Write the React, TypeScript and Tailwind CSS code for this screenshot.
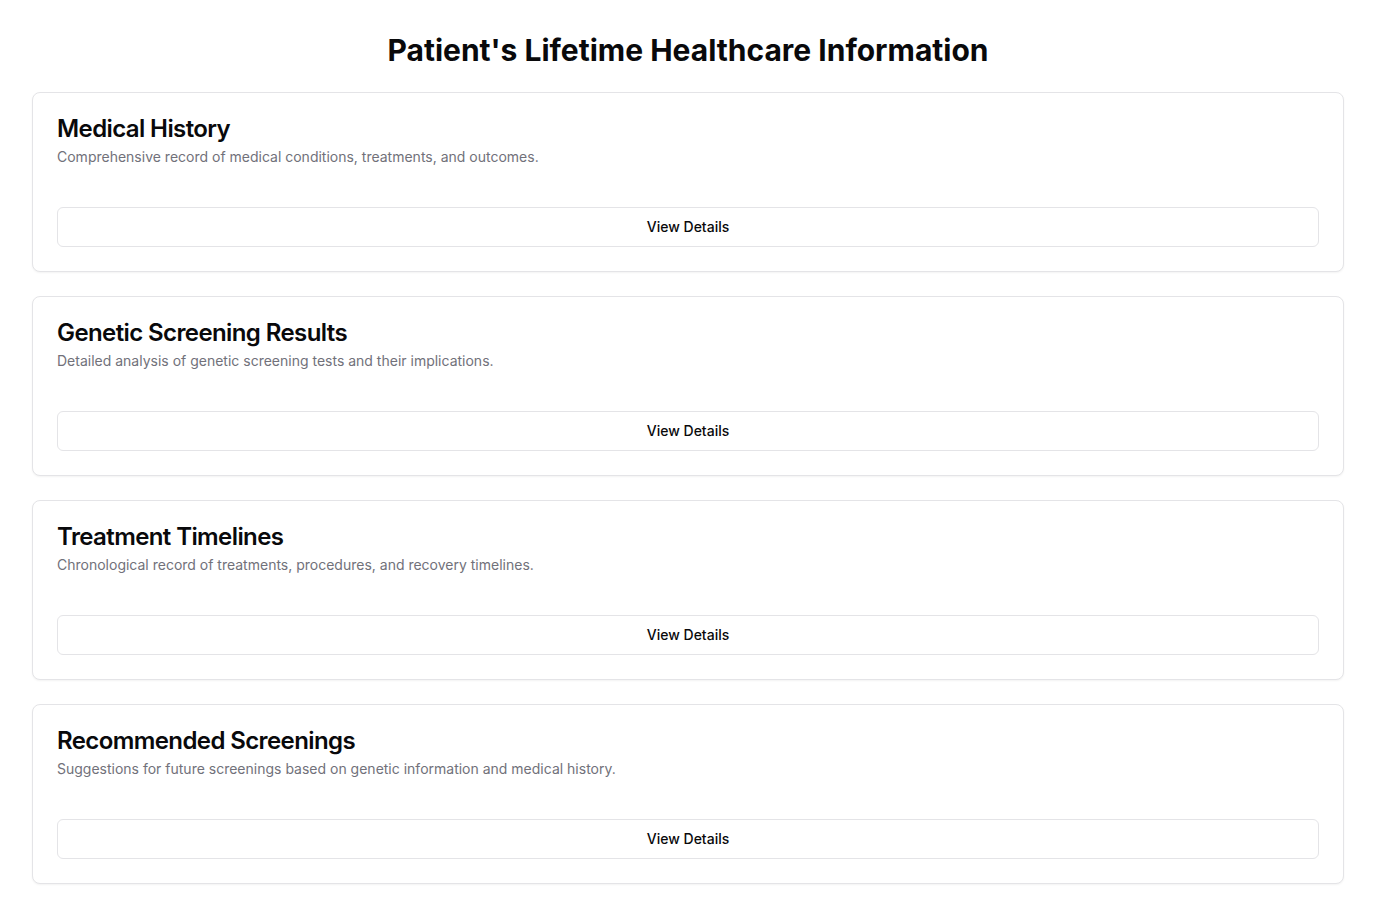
const sections = [
  {
    title: "Medical History",
    description: "Comprehensive record of medical conditions, treatments, and outcomes.",
  },
  {
    title: "Genetic Screening Results",
    description: "Detailed analysis of genetic screening tests and their implications.",
  },
  {
    title: "Treatment Timelines",
    description: "Chronological record of treatments, procedures, and recovery timelines.",
  },
  {
    title: "Recommended Screenings",
    description: "Suggestions for future screenings based on genetic information and medical history.",
  },
];

const App = () => {
  return (
    <div
      className="min-h-screen bg-white p-8 text-[#09090b]"
      style={{ fontFamily: "Inter, 'Noto Sans', sans-serif" }}
    >
      <h1 className="mb-6 text-center text-3xl font-bold">
        Patient's Lifetime Healthcare Information
      </h1>
      <div className="flex flex-col gap-6">
        {sections.map((s) => (
          <div
            key={s.title}
            className="rounded-lg border border-[#e4e4e7] bg-white p-6 shadow-xs"
          >
            <div className="flex flex-col gap-1.5">
              <h2 className="text-2xl leading-none font-semibold tracking-tight">
                {s.title}
              </h2>
              <p className="text-sm text-[#71717a]">{s.description}</p>
            </div>
            <button className="mt-10 flex h-10 w-full items-center justify-center rounded-md border border-[#e4e4e7] bg-white text-sm font-medium hover:bg-gray-50">
              View Details
            </button>
          </div>
        ))}
      </div>
    </div>
  );
};

export default App;
